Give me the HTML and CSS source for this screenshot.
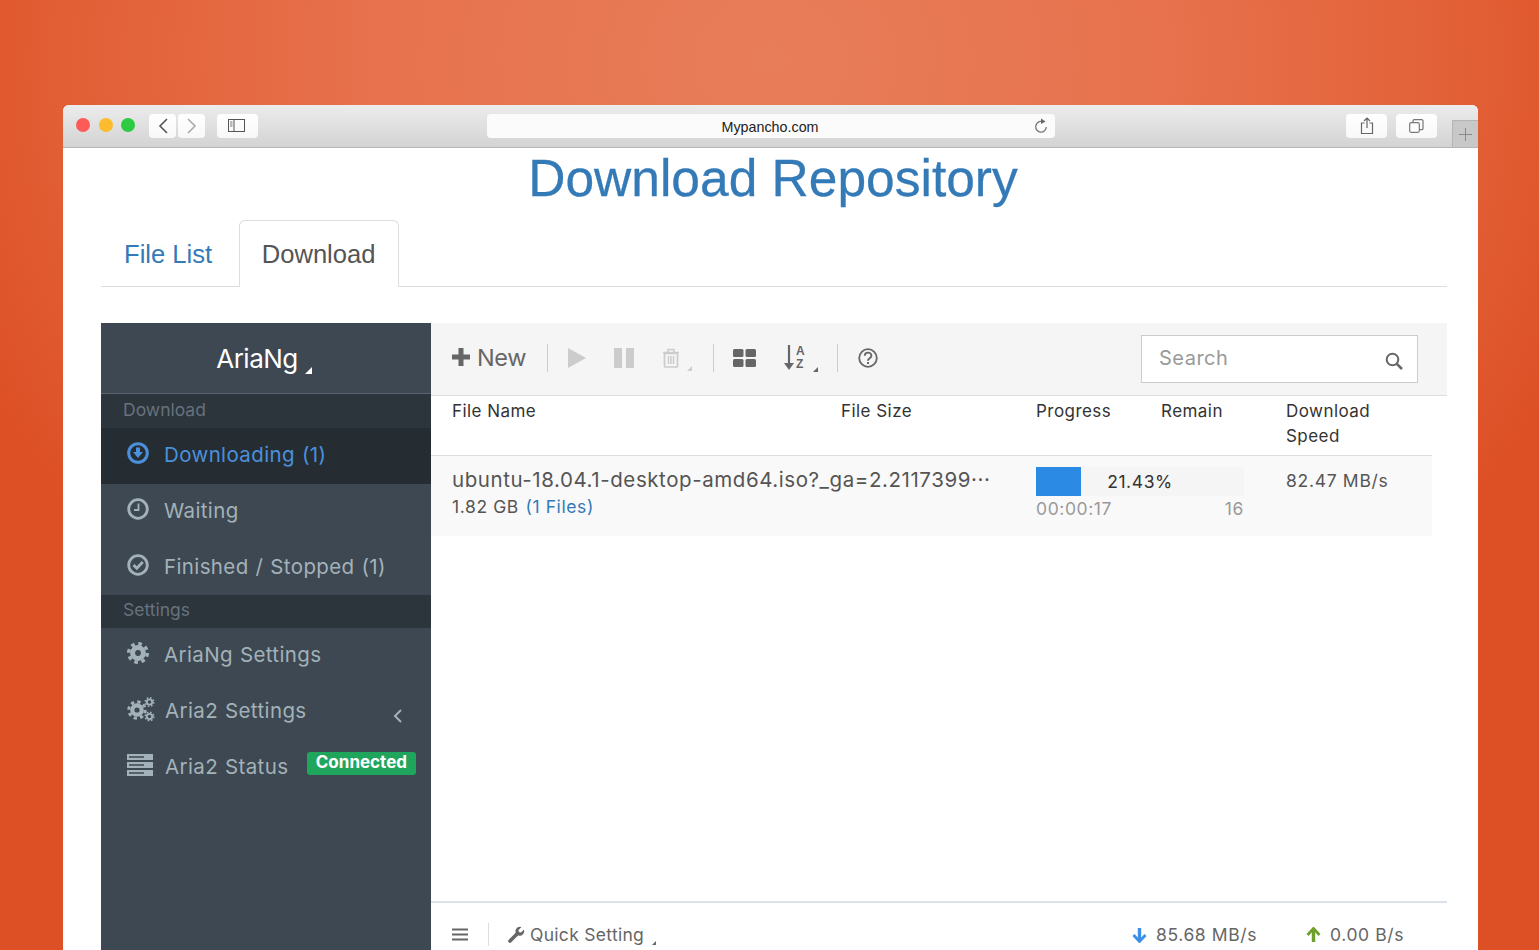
FILE: index.html
```html
<!DOCTYPE html>
<html lang="en">
<head>
<meta charset="utf-8">
<title>Download Repository</title>
<link rel="stylesheet" href="styles.css">
</head>
<body>
<div class="window">
  <header class="chrome">
    <div class="lights"><i class="light red"></i><i class="light yellow"></i><i class="light green"></i></div>
    <div class="navgroup">
      <span class="cbtn nav"><svg width="12" height="18" viewBox="0 0 12 18"><path d="M10 2 3 9l7 7" fill="none" stroke="#555" stroke-width="1.6"/></svg></span>
      <span class="cbtn nav"><svg width="12" height="18" viewBox="0 0 12 18"><path d="M2 2l7 7-7 7" fill="none" stroke="#aaa" stroke-width="1.6"/></svg></span>
    </div>
    <span class="cbtn wide side"><svg width="18" height="14" viewBox="0 0 18 14"><rect x=".5" y=".5" width="16" height="12" fill="none" stroke="#555"/><path d="M6 .5v12" stroke="#555"/><path d="M2 3h2.500M2 5h2.500M2 7h2.500" stroke="#777"/></svg></span>
    <div class="urlbar"><span class="url">Mypancho.com</span>
      <svg class="reload" width="16" height="17" viewBox="0 0 16 17"><path d="M8.500 3.500A5.300 5.300 0 1 0 13.300 9" fill="none" stroke="#777" stroke-width="1.300"/><path d="M8 .5l4.500 3L8 6z" fill="#666"/></svg>
    </div>
    <span class="cbtn wide share"><svg width="14" height="18" viewBox="0 0 14 18"><path d="M4.500 6H1.500v10.500h11V6H9.500M7 11V1.500M4 4l3-3 3 3" fill="none" stroke="#666" stroke-width="1.200"/></svg></span>
    <span class="cbtn wide tabsbtn"><svg width="15" height="14" viewBox="0 0 15 14"><rect x=".7" y="3.700" width="9.600" height="9.600" rx="1.500" fill="#fff" stroke="#777" stroke-width="1.200"/><path d="M4 3.500V2a1.300 1.300 0 0 1 1.300-1.300h7.400A1.300 1.300 0 0 1 14 2v7.400a1.300 1.300 0 0 1-1.300 1.300h-2" fill="none" stroke="#777" stroke-width="1.200"/></svg></span>
    <span class="newtab"><svg width="13" height="13" viewBox="0 0 13 13"><path d="M6.500 0v13M0 6.500h13" stroke="#888"/></svg></span>
  </header>

  <main class="page">
    <h1 class="title">Download Repository</h1>
    <nav class="tabs">
      <a class="tab first">File List</a>
      <a class="tab active">Download</a>
    </nav>

    <section class="app">
      <aside class="sidebar">
        <div class="logo">AriaNg<i class="caret caret-white"></i></div>
        <div class="section">Download</div>
        <div class="item current">
          <svg class="ico" width="22" height="22" viewBox="0 0 22 22"><circle cx="11" cy="11" r="9.300" fill="none" stroke="currentColor" stroke-width="3"/><path d="M9 5.500h4V10h3l-5 6-5-6h3z" fill="currentColor"/></svg>
          <span>Downloading (1)</span>
        </div>
        <div class="item">
          <svg class="ico" width="22" height="22" viewBox="0 0 22 22"><circle cx="11" cy="11" r="9.300" fill="none" stroke="currentColor" stroke-width="2.800"/><path d="M11.500 5.500V12H7" fill="none" stroke="currentColor" stroke-width="1.800"/></svg>
          <span>Waiting</span>
        </div>
        <div class="item">
          <svg class="ico" width="22" height="22" viewBox="0 0 22 22"><circle cx="11" cy="11" r="9.300" fill="none" stroke="currentColor" stroke-width="2.800"/><path d="M6.500 11l3.300 3.300L15.800 8" fill="none" stroke="currentColor" stroke-width="2.800"/></svg>
          <span>Finished / Stopped (1)</span>
        </div>
        <div class="section short">Settings</div>
        <div class="item">
          <svg class="ico" width="22" height="22" viewBox="0 0 22 22"><circle cx="11" cy="11" r="9.300" fill="none" stroke="currentColor" stroke-width="3.400" stroke-dasharray="3.650 3.650"/><circle cx="11" cy="11" r="5.400" fill="none" stroke="currentColor" stroke-width="5"/></svg>
          <span>AriaNg Settings</span>
        </div>
        <div class="item">
          <svg class="ico wide-ico" width="28" height="26" viewBox="0 0 28 26"><circle cx="10" cy="14" r="8.200" fill="none" stroke="currentColor" stroke-width="3" stroke-dasharray="3.220 3.220"/><circle cx="10" cy="14" r="4.700" fill="none" stroke="currentColor" stroke-width="4.200"/><circle cx="22.500" cy="6" r="2.700" fill="none" stroke="currentColor" stroke-width="1.800"/><circle cx="22.500" cy="6" r="4.300" fill="none" stroke="currentColor" stroke-width="1.400" stroke-dasharray="1.690 1.690"/><circle cx="22.500" cy="20.500" r="2.700" fill="none" stroke="currentColor" stroke-width="1.800"/><circle cx="22.500" cy="20.500" r="4.300" fill="none" stroke="currentColor" stroke-width="1.400" stroke-dasharray="1.690 1.690"/></svg>
          <span>Aria2 Settings</span>
          <svg class="chev" width="10" height="16" viewBox="0 0 10 16"><path d="M8 2 2 8l6 6" fill="none" stroke="currentColor" stroke-width="2"/></svg>
        </div>
        <div class="item">
          <svg class="ico wide-ico" width="28" height="22" viewBox="0 0 28 22"><path d="M0 0h26v6H0zM0 8h26v6H0zM0 16h26v6H0z" fill="currentColor"/><path d="M2 3h15M2 11h15M2 19h15" stroke="#3d4852" stroke-width="1.300"/></svg>
          <span>Aria2 Status</span>
          <b class="badge">Connected</b>
        </div>
      </aside>

      <div class="content">
        <div class="toolbar">
          <span class="new"><svg width="18" height="18" viewBox="0 0 18 18"><path d="M9 0v18M0 9h18" stroke="#666" stroke-width="5"/></svg>New</span>
          <i class="sep sep-new"></i>
          <span class="tool"><svg width="18" height="20" viewBox="0 0 18 20"><path d="M0 0l18 10L0 20z" fill="#ccc"/></svg></span>
          <span class="tool"><svg width="20" height="20" viewBox="0 0 20 20"><path d="M0 0h8v20H0zM12 0h8v20h-8z" fill="#ccc"/></svg></span>
          <span class="tool trash"><svg width="18" height="20" viewBox="0 0 18 20"><path d="M2.500 5.500h13V18a1 1 0 0 1-1 1h-11a1 1 0 0 1-1-1z" fill="none" stroke="#ccc" stroke-width="1.700"/><path d="M1 4.500h16M6 4V1.500h6V4M6.500 8v8M9 8v8M11.500 8v8" fill="none" stroke="#ccc" stroke-width="1.500"/></svg><i class="caret caret-light"></i></span>
          <i class="sep sep-view"></i>
          <span class="tool grid"><svg width="23" height="18" viewBox="0 0 23 18"><rect width="10.500" height="8" rx="1.500" fill="#666"/><rect x="12.500" width="10.500" height="8" rx="1.500" fill="#666"/><rect y="10" width="10.500" height="8" rx="1.500" fill="#666"/><rect x="12.500" y="10" width="10.500" height="8" rx="1.500" fill="#666"/></svg></span>
          <span class="tool sort"><svg width="12" height="26" viewBox="0 0 12 26"><path d="M6 0v22" stroke="#666" stroke-width="2.200"/><path d="M1 18l5 7 5-7z" fill="#666"/></svg><span class="az"><span>A</span><span>Z</span></span><i class="caret caret-dark"></i></span>
          <i class="sep"></i>
          <span class="tool help"><svg width="20" height="20" viewBox="0 0 20 20"><circle cx="10" cy="10" r="8.800" fill="none" stroke="#666" stroke-width="1.800"/><path d="M6.800 7.800c0-4.300 6.600-4.200 6.600-.1 0 2.600-3.400 2.400-3.400 5" fill="none" stroke="#666" stroke-width="1.900"/><path d="M9 14h2v2H9z" fill="#666"/></svg></span>
          <label class="search"><span class="placeholder">Search</span>
            <svg width="18" height="18" viewBox="0 0 18 18"><circle cx="7.500" cy="7.500" r="5.800" fill="none" stroke="#666" stroke-width="2"/><path d="M11.800 11.800 17 17" stroke="#666" stroke-width="2.600"/></svg>
          </label>
        </div>

        <div class="table">
          <div class="thead row-grid">
            <div>File Name</div><div>File Size</div><div>Progress</div><div>Remain</div><div>Download<br>Speed</div>
          </div>
          <div class="task row-grid">
            <div class="task-name">
              <div class="fname">ubuntu-18.04.1-desktop-amd64.iso?_ga=2.2117399···</div>
              <div class="fsize">1.82 GB <a class="files">(1 Files)</a></div>
            </div>
            <div class="task-progress">
              <div class="bar"><div class="fill" style="width:21.43%"></div><span class="pct">21.43%</span></div>
              <div class="bar-meta"><span>00:00:17</span><span>16</span></div>
            </div>
            <div class="task-speed">82.47 MB/s</div>
          </div>
        </div>

        <footer class="footer">
          <svg class="menu" width="16" height="13" viewBox="0 0 16 13"><path d="M0 1.500h16M0 6.500h16M0 11.500h16" stroke="#666" stroke-width="2.200"/></svg>
          <i class="fsep"></i>
          <span class="quick"><svg width="17" height="17" viewBox="0 0 17 17"><path d="M2 15 9 8" stroke="#666" stroke-width="3.600" stroke-linecap="round"/><path d="M7.500 6.500a4.600 4.600 0 0 1 6-5.500l-3 3 .4 2.100 2.100.4 3-3a4.600 4.600 0 0 1-5.500 6z" fill="#666"/></svg>Quick Setting<i class="caret caret-dark tiny"></i></span>
          <span class="rate down"><svg width="15" height="16" viewBox="0 0 15 16"><path d="M7.500 1v12" stroke="#3d8fe8" stroke-width="3.400"/><path d="M1.500 8l6 6.500 6-6.500" fill="none" stroke="#3d8fe8" stroke-width="2.800"/></svg>85.68 MB/s</span>
          <span class="rate up"><svg width="15" height="16" viewBox="0 0 15 16"><path d="M7.500 15V3" stroke="#6f9f2d" stroke-width="3.400"/><path d="M1.500 8l6-6.500 6 6.500" fill="none" stroke="#6f9f2d" stroke-width="2.800"/></svg>0.00 B/s</span>
        </footer>
      </div>
    </section>
  </main>
</div>
</body>
</html>
```
FILE: styles.css
```css
* { box-sizing: border-box; }
html, body { margin: 0; height: 950px; overflow: hidden; }
body {
  padding: 105px 61px 0 63px;
  background: radial-gradient(ellipse 880px 760px at 770px 60px, #e87d5a 0%, #e7724d 45%, #e25f35 80%, #dd4f25 100%);
  font-family: Inter, sans-serif;
}
.window {
  height: 845px;
  display: flex;
  flex-direction: column;
  background: #fff;
  border-radius: 6px 6px 0 0;
  overflow: hidden;
}

/* browser chrome */
.chrome {
  flex: none;
  height: 43px;
  display: flex;
  align-items: flex-start;
  padding: 9px 0 0 13px;
  background: linear-gradient(#ececec, #d3d3d3);
  border-bottom: 1px solid #b4b4b4;
}
.lights { display: flex; gap: 8.500px; margin-top: 4px; }
.light { width: 14px; height: 14px; border-radius: 50%; }
.red { background: #fc5b57; }
.yellow { background: #fdbb2e; }
.green { background: #2ccb42; }
.navgroup { display: flex; gap: 2px; margin-left: 14px; }
.cbtn {
  height: 24px;
  display: flex;
  align-items: center;
  justify-content: center;
  background: linear-gradient(#fff, #f8f8f8);
  border-radius: 4px;
}
.nav { width: 27px; }
.wide { width: 41px; }
.side { margin-left: 12px; }
.urlbar {
  position: relative;
  width: 569px;
  height: 24px;
  margin-left: 229px;
  background: #fbfbfb;
  border-radius: 4px;
  display: flex;
  align-items: center;
  justify-content: center;
}
.url { font: 14.300px "Liberation Sans", sans-serif; color: #222; padding-right: 2px; padding-top: 2px; }
.reload { position: absolute; right: 6px; top: 4px; }
.share { margin-left: 291px; }
.tabsbtn { margin-left: 9px; }
.newtab {
  width: 26px;
  height: 27px;
  margin: 6px 0 0 15px;
  background: #c8c8c8;
  border: 1px solid #b4b4b4;
  border-right: 0;
  border-bottom: 0;
  display: flex;
  align-items: center;
  justify-content: center;
}

/* page */
.page {
  flex: 1;
  min-height: 0;
  display: flex;
  flex-direction: column;
  padding: 0 31px 0 38px;
}
.title {
  margin: 0;
  height: 72px;
  padding-right: 2px;
  font: 400 51.500px/60px "Liberation Sans", sans-serif;
  color: #337ab7;
  text-align: center;
  -webkit-text-stroke: .3px #337ab7;
}
.tabs {
  flex: none;
  display: flex;
  gap: 2px;
  height: 67px;
  border-bottom: 1px solid #ddd;
}
.tab {
  height: 67px;
  padding: 0 22px;
  font: 25.600px/66px "Liberation Sans", sans-serif;
  color: #337ab7;
  border: 1px solid transparent;
  border-radius: 6px 6px 0 0;
}
.tab.first { padding-right: 24px; }
.tab.active {
  padding: 0 22px 0 21.500px;
  color: #555;
  background: #fff;
  border-color: #ddd #ddd #fff;
}

/* AriaNg */
.app {
  flex: 1;
  min-height: 0;
  display: flex;
  margin-top: 36px;
}
.sidebar {
  flex: none;
  width: 330px;
  background: #3d4852;
  color: #b8c7ce;
}
.logo {
  height: 71px;
  border-bottom: 1px solid #5a6670;
  display: flex;
  align-items: center;
  justify-content: center;
  font-size: 26px;
  letter-spacing: -.5px;
  color: #fff;
  padding-right: 4px;
}
.caret {
  display: block;
  width: 0;
  height: 0;
  border-style: solid;
  border-width: 0 0 7px 7px;
  border-color: transparent;
}
.caret-white { border-bottom-color: #fff; margin: 25px 0 0 7px; }
.caret-light { border-width: 0 0 5px 5px; border-bottom-color: #ccc; margin: 20px 0 0 7px; }
.caret-dark { border-width: 0 0 5px 5px; border-bottom-color: #666; margin: 22px 0 0 8px; }
.caret-dark.tiny { border-width: 0 0 4px 4px; margin: 16px 0 0 3px; }
.section {
  height: 34px;
  padding-left: 22px;
  background: #2c343c;
  color: #66727c;
  font-size: 17.500px;
  line-height: 32px;
}
.section.short { height: 33px; line-height: 30px; }
.item {
  height: 55.700px;
  display: flex;
  align-items: center;
  padding: 0 0 2px 26px;
  font-size: 20.500px;
  letter-spacing: .38px;
  word-spacing: .8px;
  color: #a3b2b8;
}
.item.current { background: #252d32; color: #4a90dc; }
.ico { flex: none; margin-right: 15px; margin-top: -3px; }
.wide-ico { margin-right: 10px; margin-left: 0; }
.chev { margin-left: auto; margin-right: 28px; margin-top: 10px; }
.badge {
  margin-left: auto;
  margin-right: 15px;
  margin-top: -6px;
  padding: 0 9px;
  height: 23px;
  line-height: 21px;
  background: #20a55c;
  color: #fff;
  border-radius: 3px;
  font-size: 17px;
  font-weight: 700;
  letter-spacing: 0;
}

.content {
  flex: 1;
  min-width: 0;
  display: flex;
  flex-direction: column;
  color: #555;
}
.toolbar {
  flex: none;
  height: 73px;
  display: flex;
  align-items: center;
  padding: 0 29px 2px 21px;
  background: #f5f5f5;
  border-bottom: 1px solid #ddd;
}
.new {
  display: flex;
  align-items: center;
  gap: 7px;
  padding-bottom: 2px;
  font-size: 23.500px;
  color: #666;
  letter-spacing: -.4px;
}
.sep { width: 1px; height: 28px; background: #ccc; margin: 0 20px; }
.sep-new { margin-left: 21px; }
.sep-view { margin: 0 19px 0 21px; }
.tool { display: flex; align-items: center; }
.tool + .tool { margin-left: 28px; }
.tool + .sort { margin-left: 27px; }
.sort { margin-right: -1px; }
.az {
  display: flex;
  flex-direction: column;
  font: 700 12px/13px "Liberation Sans", sans-serif;
  color: #666;
  margin-left: 1px;
}
.search {
  margin-left: auto;
  margin-top: 2px;
  width: 277px;
  height: 48px;
  display: flex;
  align-items: center;
  justify-content: space-between;
  padding: 0 14px 0 17px;
  background: #fff;
  border: 1px solid #ccc;
}
.placeholder { font-size: 20px; letter-spacing: .5px; color: #999; margin-top: -3px; }
.search svg { margin-top: 3px; }

.table { flex: 1; min-height: 0; padding-right: 15px; font-size: 18px; }
.row-grid {
  display: grid;
  grid-template-columns: 389px 195px 125px 125px 1fr;
  padding-left: 21px;
}
.thead {
  height: 60px;
  padding-top: 3px;
  line-height: 24.500px;
  color: #333;
  border-bottom: 1px solid #ddd;
  font-size: 17px;
  letter-spacing: .45px;
}
.task {
  height: 80px;
  background: #f9f9f9;
  grid-template-columns: 584px 250px 1fr;
}
.fname { font-size: 20.500px; letter-spacing: .57px; line-height: 26px; margin-top: 11px; color: #555; white-space: nowrap; }
.fsize { font-size: 17.500px; letter-spacing: .6px; line-height: 28px; color: #555; }
.files { color: #337ab7; margin-left: 1px; }
.task-progress { width: 208px; padding-top: 11px; }
.bar {
  position: relative;
  height: 29px;
  background: #f5f5f5;
  display: flex;
  align-items: center;
  justify-content: center;
}
.fill { position: absolute; left: 0; top: 0; bottom: 0; background: #2b8ae3; }
.pct { position: relative; font-size: 17.500px; letter-spacing: .6px; color: #333; }
.bar-meta {
  display: flex;
  justify-content: space-between;
  font-size: 17.500px;
  letter-spacing: .6px;
  line-height: 26px;
  color: #999;
}
.task-speed { padding-top: 12px; font-size: 17.500px; letter-spacing: .7px; line-height: 26px; color: #555; }

.footer {
  flex: none;
  height: 49px;
  display: flex;
  align-items: center;
  padding: 16px 43px 0 21px;
  border-top: 2px solid #dbe2e9;
  font-size: 17.500px;
  letter-spacing: .6px;
  color: #666;
}
.fsep { width: 1px; height: 23px; background: #ddd; margin: 0 19px 0 20px; }
.quick { display: flex; align-items: center; gap: 5px; letter-spacing: .3px; }
.rate { display: flex; align-items: center; gap: 9px; }
.down { margin-left: auto; }
.up { margin-left: 49px; }
```
